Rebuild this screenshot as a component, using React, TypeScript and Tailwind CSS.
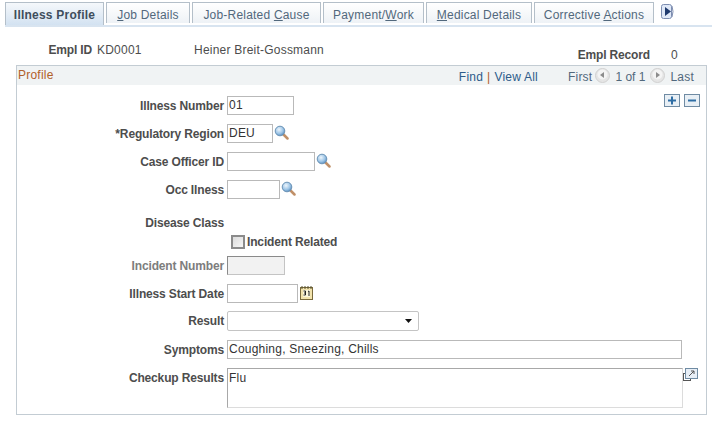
import React from "react";

const Lens = () => (
  <svg width="15" height="16" viewBox="0 0 15 16" className="ml-[1px] mt-[1px] shrink-0">
    <defs>
      <radialGradient id="lg" cx="0.4" cy="0.35" r="0.7">
        <stop offset="0" stopColor="#eef6fc" />
        <stop offset="0.6" stopColor="#9cc4e6" />
        <stop offset="1" stopColor="#4f86b8" />
      </radialGradient>
    </defs>
    <line x1="9.500" y1="9.500" x2="13.500" y2="13.500" stroke="#c09068" strokeWidth="2.500" strokeLinecap="round" />
    <circle cx="6" cy="6" r="4.800" fill="url(#lg)" stroke="#6b93b6" strokeWidth="1" />
  </svg>
);

const Cal = () => (
  <svg width="14" height="14" viewBox="0 0 14 14" className="ml-[2px] mt-[2px] shrink-0">
    <rect x="0.500" y="1.500" width="12" height="12" fill="#f2e3ad" stroke="#7a6a3c" />
    <path d="M2 0v3M5 0v3M8 0v3M11 0v3" stroke="#55502f" strokeWidth="1" />
    <rect x="3" y="4" width="7" height="7" fill="#fbf6dc" />
    <path d="M3.500 5h2v2h-1.500M5.500 7v2h-2M8 5.500 9 5v5" stroke="#222" strokeWidth="1" fill="none" />
  </svg>
);

const Row = ({ label, h = 28, muted, children }: { label: string; h?: number; muted?: boolean; children?: React.ReactNode }) => (
  <div className="flex items-start" style={{ height: h }}>
    <div className={`w-[210px] text-right font-bold tracking-[-0.15px] pr-[3px] pt-[3px] leading-[15px] ${muted ? "text-[#7d7d7d]" : "text-[#4d4d4d]"}`}>{label}</div>
    <div className="flex items-start">{children}</div>
  </div>
);

const Input = ({ w, value = "", disabled }: { w: string; value?: string; disabled?: boolean }) => (
  <div
    className={`${w} h-[19px] px-[1px] border leading-[17px] text-[#333] ${
      disabled ? "bg-[#f2f2f2] border-[#c4c4c4] border-t-[#8a8a8a] border-l-[#8a8a8a]" : "bg-white border-[#b9b9b9]"
    }`}
  >
    {value}
  </div>
);

const Tab = ({ w, active, children }: { w: string; active?: boolean; children: React.ReactNode }) => (
  <div
    className={`${w} flex items-center justify-center border border-b-0 border-[#b4bfc9] ${
      active
        ? "font-bold text-[#3e4d5c] bg-gradient-to-b from-[#f5f8fb] to-[#d3e2f1] h-[23px] pt-[1px]"
        : "text-[#52687c] tracking-[0.2px] bg-gradient-to-b from-white to-[#eef2f6] h-[21px] pt-[4px]"
    }`}
  >
    <span>{children}</span>
  </div>
);

const Round = ({ dir }: { dir: "l" | "r" }) => (
  <svg width="15" height="15" viewBox="0 0 15 15" className="mb-[3px]">
    <circle cx="7.500" cy="7.500" r="7" fill="#e5e5e5" stroke="#d0d0d0" />
    <circle cx="7.500" cy="6.500" r="5" fill="#f4f4f4" />
    {dir === "l" ? <path d="M9 4v6L5 7z" fill="#8c8c8c" /> : <path d="M6 4v6l4-3z" fill="#8c8c8c" />}
  </svg>
);

export default function App() {
  return (
    <div className="w-[717px] h-[423px] bg-white overflow-hidden text-[12px] tracking-[0.22px] font-['Liberation_Sans',Arial,sans-serif]">
      <div className="pt-[4px] pl-[5px] w-[712px]">
        <div className="flex items-end h-[21px] border-b-[2px] border-[#d8e4f0] box-content">
          <div className="flex items-start gap-[2px] h-[23px]">
            <Tab w="w-[99px]" active>Illness Profile</Tab>
            <Tab w="w-[84px]"><u>J</u>ob Details</Tab>
            <Tab w="w-[129px]">Job-Related <u>C</u>ause</Tab>
            <Tab w="w-[101px]">Payment/<u>W</u>ork</Tab>
            <Tab w="w-[106px]"><u>M</u>edical Details</Tab>
            <Tab w="w-[120px]">Corrective <u>A</u>ctions</Tab>
            <svg width="14" height="15" viewBox="0 0 14 15" className="ml-[5px] mt-[2px]">
              <rect x="0.500" y="0.500" width="10" height="14" rx="2" fill="#dfe8f7" stroke="#7d8db0" />
              <path d="M4 3v9l6-4.500z" fill="#1f3a6e" />
              <path d="M11 2q2 5.500 0 11" stroke="#7d8db0" fill="none" />
            </svg>
          </div>
        </div>
      </div>

      <div className="flex h-[24px] mt-[14px]">
        <div className="w-[97px] text-right font-bold tracking-[-0.15px] text-[#4d4d4d] pr-[5px]">Empl ID</div>
        <div className="w-[97px] text-[#4d4d4d]">KD0001</div>
        <div className="text-[#4d4d4d]">Heiner Breit-Gossmann</div>
        <div className="ml-auto flex pt-[5px] mr-[28px]">
          <span className="font-bold tracking-[-0.15px] text-[#4d4d4d]">Empl Record</span>
          <span className="w-[39px] pl-[21px] text-[#4d4d4d]">0</span>
        </div>
      </div>

      <div className="ml-[16px] w-[691px] h-[350px] border border-[#c3ccd3]">
        <div className="h-[19px] bg-[#f0f3f4] flex items-center pl-[1px] pr-[12px]">
          <span className="text-[#b0602a] pb-[1px]">Profile</span>
          <div className="ml-auto flex items-center text-[#52687c] pt-[2px]">
            <span className="text-[#2d5b8a]">Find</span>
            <span className="text-[#b0602a] mx-[4px]">|</span>
            <span className="text-[#2d5b8a]">View All</span>
            <span className="ml-[30px] mr-[3px]">First</span>
            <Round dir="l" />
            <span className="ml-[5px] mr-[5px] tracking-normal">1 of 1</span>
            <Round dir="r" />
            <span className="ml-[5px]">Last</span>
          </div>
        </div>

        <div className="flex justify-end gap-[4px] pr-[6px] pt-[9px] h-[11px]">
          <svg width="16" height="13" viewBox="0 0 16 13" className="shrink-0">
            <rect x="0.500" y="0.500" width="15" height="12" fill="#e8eff5" stroke="#6f8ba3" />
            <path d="M8 2.500v8M4 6.500h8" stroke="#2f6ea5" strokeWidth="2" />
          </svg>
          <svg width="16" height="13" viewBox="0 0 16 13" className="shrink-0">
            <rect x="0.500" y="0.500" width="15" height="12" fill="#e8eff5" stroke="#6f8ba3" />
            <path d="M4 6.500h8" stroke="#2f6ea5" strokeWidth="2" />
          </svg>
        </div>

        <div>
          <Row label="Illness Number"><Input w="w-[67px]" value="01" /></Row>
          <Row label="*Regulatory Region">
            <Input w="w-[46px]" value="DEU" /><Lens />
          </Row>
          <Row label="Case Officer ID">
            <Input w="w-[88px]" /><Lens />
          </Row>
          <Row label="Occ Ilness" h={33}>
            <Input w="w-[53px]" /><Lens />
          </Row>
          <Row label="Disease Class" h={19} />
          <div className="flex items-start h-[24px] pt-[3px]">
            <div className="w-[210px]" />
            <div className="ml-[4px] w-[14px] h-[14px] border-2 border-[#8b8b8b] bg-gradient-to-br from-[#dcdcdc] to-[#f6f6f6]" />
            <span className="ml-[2px] font-bold tracking-[-0.15px] text-[#4d4d4d] leading-[15px]">Incident Related</span>
          </div>
          <Row label="Incident Number" muted><Input w="w-[58px]" disabled /></Row>
          <Row label="Illness Start Date" h={27}>
            <Input w="w-[71px]" /><Cal />
          </Row>
          <Row label="Result" h={29}>
            <div className="w-[192px] h-[20px] bg-white border border-[#c4c4c4] rounded-[2px] flex items-center justify-end pr-[5px]">
              <svg width="8" height="5" viewBox="0 0 8 5"><path d="M0 0h7L3.500 4z" fill="#111" /></svg>
            </div>
          </Row>
          <Row label="Symptoms"><Input w="w-[455px]" value="Coughing, Sneezing, Chills" /></Row>
          <Row label="Checkup Results" h={40}>
            <div className="w-[456px] h-[40px] border border-[#dcdcdc] border-t-[#a8a8a8] border-l-[#a8a8a8] px-[1px] leading-[18px] text-[#333]">Flu</div>
            <svg width="15" height="14" viewBox="0 0 15 14" className="shrink-0">
              <rect x="0.500" y="5.500" width="7" height="7" fill="#fff" stroke="#555" />
              <rect x="2.500" y="0.500" width="12" height="10" fill="#e7eef6" stroke="#6f8ba3" />
              <path d="M6 8l5-5M8 3h3v3" stroke="#555" fill="none" />
            </svg>
          </Row>
        </div>
      </div>
    </div>
  );
}
